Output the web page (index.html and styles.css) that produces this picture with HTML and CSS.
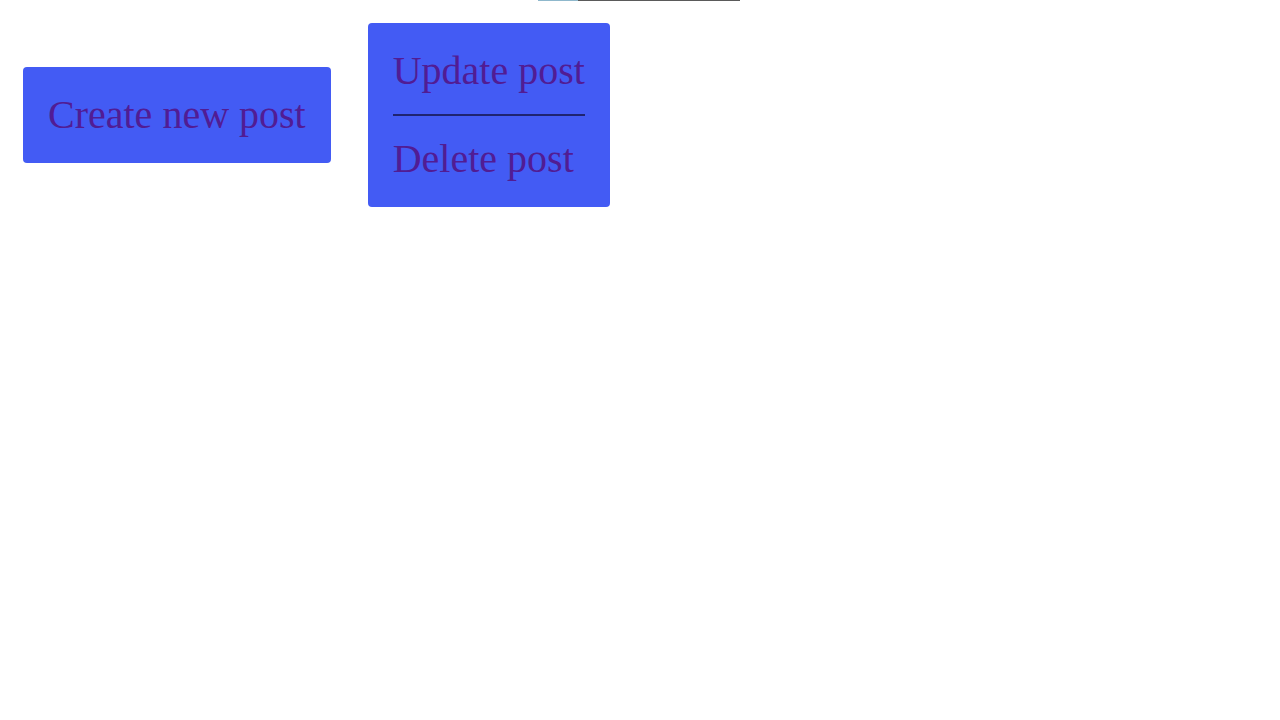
FILE: index.html
```html
<!DOCTYPE html>
<html>
<head>
<meta charset="utf-8">
<link rel="stylesheet" href="styles.css">
</head>
<body>
<div class="strip"><span class="strip-blue"></span><span class="strip-gray"></span></div>
<div class="actions">
  <a class="btn" href="#">Create new post</a>
  <div class="menu">
    <a class="menu-item" href="#">Update post</a>
    <hr class="menu-sep">
    <a class="menu-item" href="#">Delete post</a>
  </div>
</div>
</body>
</html>
```
FILE: styles.css
```css
html, body {
  margin: 0;
  padding: 0;
  background: #ffffff;
}
body {
  font-family: "Liberation Serif", "Times New Roman", serif;
}
.strip {
  display: flex;
  height: 1px;
  margin-left: 538px;
}
.strip-blue {
  width: 40px;
  background: #8fb8cc;
}
.strip-gray {
  width: 162px;
  background: #5a5a5a;
}
.actions {
  display: flex;
  align-items: center;
  gap: 37px;
  padding: 22px 0 0 23px;
}
.btn,
.menu {
  background: #435bf4;
  border-radius: 4px;
  padding: 25px;
  font-size: 40px;
  line-height: 46px;
  color: #511c94;
  text-decoration: none;
}
.btn {
  display: block;
}
.menu {
  display: flex;
  flex-direction: column;
}
.menu-item {
  color: #511c94;
  text-decoration: none;
  display: block;
}
.menu-sep {
  border: 0;
  border-top: 2px solid #1f2470;
  margin: 20px 0;
  height: 0;
}
```
